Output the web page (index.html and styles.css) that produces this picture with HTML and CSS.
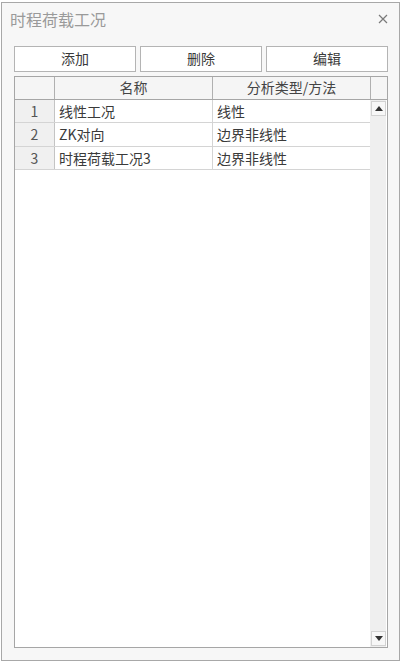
FILE: index.html
```html
<!DOCTYPE html>
<html lang="zh">
<head>
<meta charset="utf-8">
<title>时程荷载工况</title>
<link rel="stylesheet" href="styles.css">
</head>
<body>
<div class="dialog">
  <div class="titlebar">
    <span class="title">时程荷载工况</span>
    <svg class="close" width="10" height="10" viewBox="0 0 10 10"><path d="M1 1L9 9M9 1L1 9" stroke="#7a7a7a" stroke-width="1.2" fill="none"/></svg>
  </div>
  <div class="content">
    <div class="buttons">
      <div class="btn">添加</div>
      <div class="btn">删除</div>
      <div class="btn">编辑</div>
    </div>
    <div class="grid">
      <div class="head">
        <div class="hc num"></div>
        <div class="hc name">名称</div>
        <div class="hc type">分析类型/方法</div>
        <div class="hc corner"></div>
      </div>
      <div class="body">
        <div class="rows">
          <div class="row r1"><div class="c num">1</div><div class="c name">线性工况</div><div class="c type">线性</div></div>
          <div class="row r2"><div class="c num">2</div><div class="c name">ZK对向</div><div class="c type">边界非线性</div></div>
          <div class="row r3"><div class="c num">3</div><div class="c name">时程荷载工况3</div><div class="c type">边界非线性</div></div>
        </div>
        <div class="scroll">
          <div class="sbtn"><svg width="8" height="5" viewBox="0 0 8 5"><path d="M0 5L4 0L8 5Z" fill="#333"/></svg></div>
          <div class="sbtn"><svg width="8" height="5" viewBox="0 0 8 5"><path d="M0 0L8 0L4 5Z" fill="#333"/></svg></div>
        </div>
      </div>
    </div>
  </div>
</div>
</body>
</html>
```
FILE: styles.css
```css
html, body {
  margin: 0;
  padding: 0;
  background: #ffffff;
}
body {
  padding: 2px 1px 0 1px;
  font-family: "Noto Sans CJK SC", "Noto Sans", sans-serif;
  color: #3a3a3a;
}
.dialog {
  box-sizing: border-box;
  width: 399px;
  height: 659px;
  border: 1px solid #a8a8a8;
  background: #f7f7f7;
  display: flex;
  flex-direction: column;
}
.titlebar {
  height: 43px;
  display: flex;
  align-items: center;
  justify-content: space-between;
  padding: 0 11px 12px 8px;
  box-sizing: border-box;
}
.title {
  font-size: 16px;
  color: #9a9a9a;
  line-height: 20px;
}
.close {
  display: block;
  margin-top: 1px;
}
.content {
  flex: 1;
  display: flex;
  flex-direction: column;
  padding: 0 9px 12px 12px;
}
.buttons {
  display: flex;
  gap: 4px;
}
.btn {
  box-sizing: border-box;
  width: 122px;
  height: 26px;
  border: 1px solid #b4b4b4;
  background: #ffffff;
  font-size: 14px;
  line-height: 23px;
  text-align: center;
  color: #3a3a3a;
}
.grid {
  margin-top: 4px;
  width: 374px;
  box-sizing: border-box;
  flex: 1;
  border: 1px solid #a6a6a6;
  background: #ffffff;
  display: flex;
  flex-direction: column;
}
.head {
  display: flex;
  height: 23px;
  border-bottom: 1px solid #a6a6a6;
  background: #f5f5f5;
  box-sizing: border-box;
}
.hc {
  font-size: 14px;
  line-height: 21px;
  text-align: center;
  color: #444;
}
.num { width: 39px; border-right: 1px solid #b0b0b0; }
.name { width: 157px; border-right: 1px solid #b0b0b0; }
.type { width: 157px; }
.hc.type { border-right: 1px solid #b0b0b0; }
.corner { width: 16px; }
.body {
  flex: 1;
  display: flex;
}
.rows {
  width: 355px;
}
.row {
  display: flex;
  height: 23px;
  box-sizing: border-box;
  border-bottom: 1px solid #d4d4d4;
}
.r2 { height: 24px; }
.c {
  font-size: 14px;
  line-height: 22px;
  color: #3a3a3a;
}
.c.num {
  background: #f0f0f0;
  text-align: center;
  color: #555;
  border-right: 1px solid #c4c4c4;
}
.c.name {
  padding-left: 4px;
  box-sizing: border-box;
  width: 158px;
  border-right: 1px solid #d4d4d4;
}
.c.type {
  padding-left: 4px;
  box-sizing: border-box;
  width: 157px;
}
.scroll {
  width: 16px;
  background: #efefef;
  display: flex;
  flex-direction: column;
  justify-content: space-between;
  padding: 1px 0 1px 1px;
  box-sizing: border-box;
}
.sbtn {
  box-sizing: border-box;
  width: 15px;
  height: 15px;
  border: 1px solid #d2d2d2;
  background: #f7f7f7;
  display: flex;
  align-items: center;
  justify-content: center;
}
.sbtn svg { display: block; }
```
